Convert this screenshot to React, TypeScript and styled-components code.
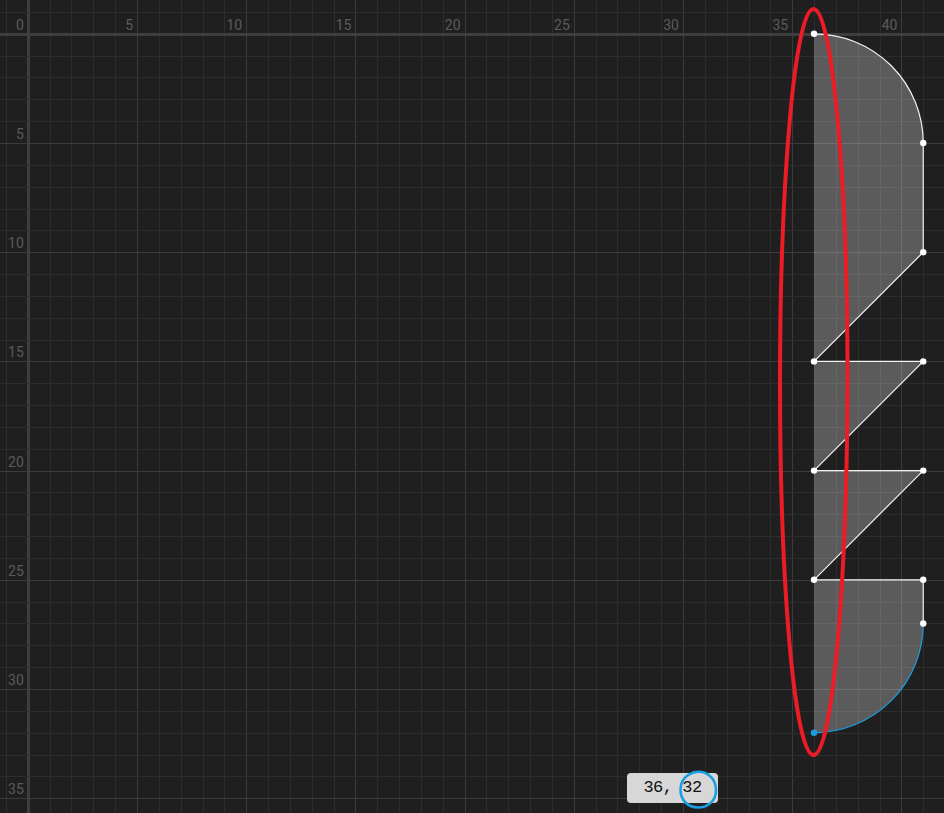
import React from "react";
import styled, { createGlobalStyle } from "styled-components";

const GlobalStyle = createGlobalStyle`
  html, body { margin: 0; padding: 0; background: #1f1f1f; overflow: hidden; }
  #root { width: 100vw; height: 100vh; }
`;

const OX = 27.8;
const OY = 33.8;
const S = 21.84;
const W = 944;
const H = 813;

const px = (u: number) => OX + u * S;
const py = (u: number) => OY + u * S;

const Viewport = styled.div`
  position: relative;
  width: 100%;
  height: 100%;
  overflow: hidden;
  background: #1f1f1f;
`;

const Canvas = styled.svg`
  display: block;
  width: 100%;
  height: 100%;
`;

const GridLine = styled.line<{ $kind: "minor" | "major" | "axis" }>`
  stroke: ${(p) => (p.$kind === "axis" ? "#3e3e3e" : p.$kind === "major" ? "#3b3b3b" : "#2d2d2d")};
  stroke-width: ${(p) => (p.$kind === "axis" ? 3 : 1)};
  shape-rendering: crispEdges;
`;

const AxisLabel = styled.text`
  font-family: Roboto, "Liberation Sans", sans-serif;
  font-size: 14px;
  fill: #5b5b5b;
  text-anchor: end;
`;

const ShapeFill = styled.path`
  fill: rgba(255, 255, 255, 0.27);
  stroke: none;
`;

const ShapeStroke = styled.path<{ $active?: boolean }>`
  fill: none;
  stroke: ${(p) => (p.$active ? "#1a9de0" : "#f2f2f2")};
  stroke-width: 1.2;
`;

const Vertex = styled.circle<{ $active?: boolean }>`
  fill: ${(p) => (p.$active ? "#1a9de0" : "#ffffff")};
`;

const Tooltip = styled.div`
  position: absolute;
  left: 627px;
  top: 773px;
  width: 91px;
  height: 30px;
  box-sizing: border-box;
  border-radius: 4px;
  background: #d7d7d7;
  color: #111111;
  font-family: "Liberation Mono", "DejaVu Sans Mono", monospace;
  font-size: 17px;
  letter-spacing: -0.5px;
  line-height: 30px;
  text-align: center;
  white-space: pre;
`;

const Annotations = styled.svg`
  position: absolute;
  inset: 0;
  width: 100%;
  height: 100%;
  pointer-events: none;
`;

const Mark = styled.path<{ $color: string; $w: number }>`
  fill: none;
  stroke: ${(p) => p.$color};
  stroke-width: ${(p) => p.$w};
  stroke-linecap: round;
`;

function Grid() {
  const lines: React.ReactNode[] = [];
  for (let i = -1; i <= 43; i++) {
    const x = Math.round(px(i)) + 0.5;
    const kind = i === 0 ? "axis" : i % 5 === 0 ? "major" : "minor";
    lines.push(<GridLine key={"v" + i} $kind={kind} x1={x} y1={0} x2={x} y2={H} />);
  }
  for (let j = -1; j <= 37; j++) {
    const y = Math.round(py(j)) + 0.5;
    const kind = j === 0 ? "axis" : j % 5 === 0 ? "major" : "minor";
    lines.push(<GridLine key={"h" + j} $kind={kind} x1={0} y1={y} x2={W} y2={y} />);
  }
  return <g>{lines}</g>;
}

function Labels() {
  const out: React.ReactNode[] = [];
  out.push(
    <AxisLabel key="o" x={px(0) - 4} y={py(0) - 4}>
      0
    </AxisLabel>
  );
  for (let i = 5; i <= 40; i += 5) {
    out.push(
      <AxisLabel key={"x" + i} x={px(i) - 4} y={py(0) - 4}>
        {i}
      </AxisLabel>
    );
  }
  for (let j = 5; j <= 35; j += 5) {
    out.push(
      <AxisLabel key={"y" + j} x={px(0) - 4} y={py(j) - 4}>
        {j}
      </AxisLabel>
    );
  }
  return <g>{out}</g>;
}

const pts: [number, number][] = [
  [36, 0],
  [41, 5],
  [41, 10],
  [36, 15],
  [41, 15],
  [36, 20],
  [41, 20],
  [36, 25],
  [41, 25],
  [41, 27],
];

function Shape() {
  const r = 5 * S;
  const P = (u: [number, number]) => `${px(u[0])} ${py(u[1])}`;
  let d = `M ${P(pts[0])} A ${r} ${r} 0 0 1 ${P(pts[1])}`;
  for (let k = 2; k < pts.length; k++) d += ` L ${P(pts[k])}`;
  const arc = `M ${P([41, 27])} A ${r} ${r} 0 0 1 ${P([36, 32])}`;
  const fill = `${d} A ${r} ${r} 0 0 1 ${P([36, 32])} Z`;
  return (
    <g>
      <ShapeFill d={fill} />
      <ShapeStroke d={d} />
      <ShapeStroke $active d={arc} />
      {pts.map((p, k) => (
        <Vertex key={k} cx={px(p[0])} cy={py(p[1])} r={3.2} />
      ))}
      <Vertex $active cx={px(36)} cy={py(32)} r={3.2} />
    </g>
  );
}

export default function App() {
  return (
    <>
      <GlobalStyle />
      <Viewport>
        <Canvas viewBox={`0 0 ${W} ${H}`} preserveAspectRatio="xMinYMin meet">
          <Grid />
          <Labels />
          <Shape />
        </Canvas>
        <Tooltip>36, 32</Tooltip>
        <Annotations viewBox={`0 0 ${W} ${H}`} preserveAspectRatio="xMinYMin meet">
          <Mark
            $color="#ec1c27"
            $w={4}
            d="M 813.5 9 C 832 9 848 180 847.5 382 C 847 590 832 755 813.5 755 C 795 755 780 590 780 382 C 780 180 795 9 813.5 9 Z"
          />
          <Mark
            $color="#1a9fe3"
            $w={2.6}
            d="M 693 772.5 C 706 769 716 778 716 790 C 716 801 708 807.5 698 807.5 C 688 807.5 680.5 800 680.5 790 C 680.5 780 687 773 697 772"
          />
        </Annotations>
      </Viewport>
    </>
  );
}
